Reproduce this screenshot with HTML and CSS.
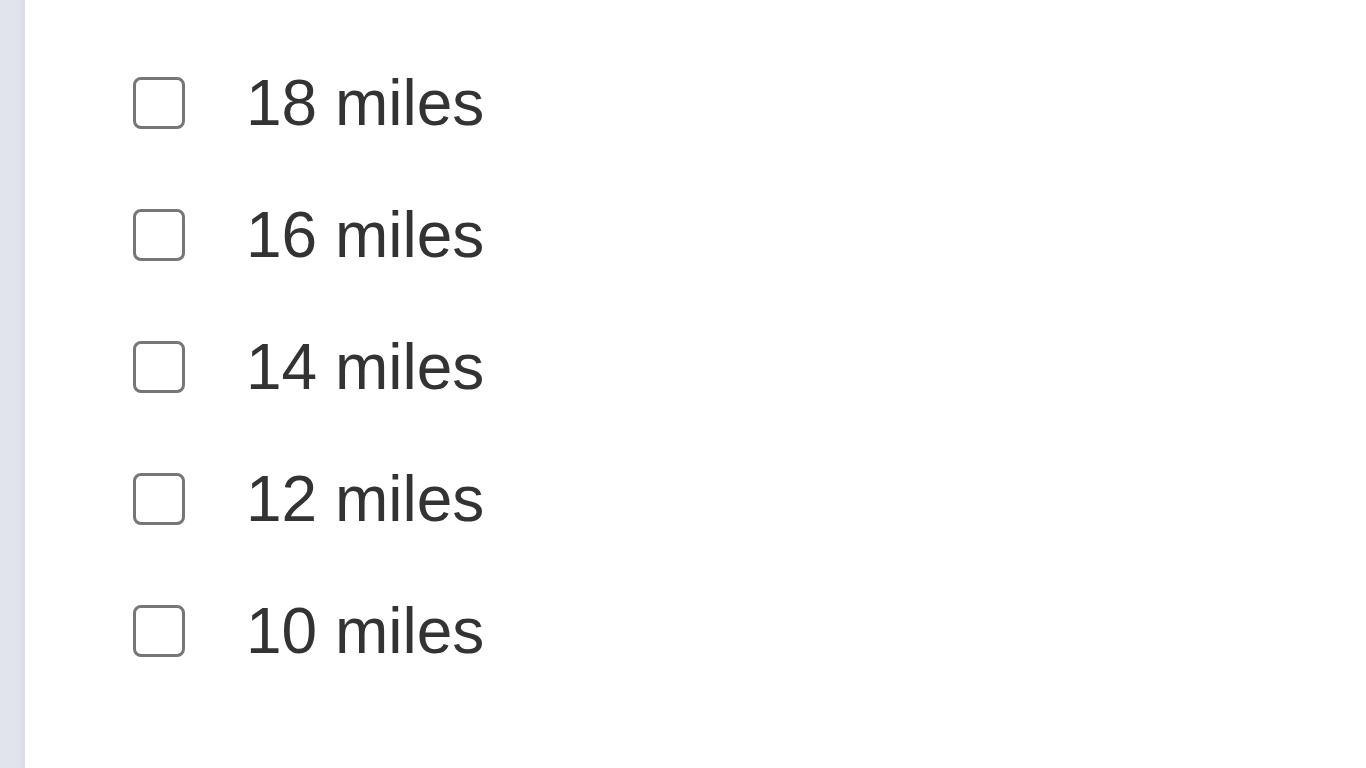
FILE: index.html
```html
<!DOCTYPE html>
<html lang="en">
<head>
<meta charset="utf-8">
<title>Distance filter</title>
<link rel="stylesheet" href="styles.css">
</head>
<body>
<div class="layout">
  <aside class="rail"></aside>
  <main class="panel">
    <ul class="options">
      <li class="option"><label><input type="checkbox" class="box"><span class="label">18 miles</span></label></li>
      <li class="option"><label><input type="checkbox" class="box"><span class="label">16 miles</span></label></li>
      <li class="option"><label><input type="checkbox" class="box"><span class="label">14 miles</span></label></li>
      <li class="option"><label><input type="checkbox" class="box"><span class="label">12 miles</span></label></li>
      <li class="option"><label><input type="checkbox" class="box"><span class="label">10 miles</span></label></li>
    </ul>
  </main>
</div>
</body>
</html>
```
FILE: styles.css
```css
html, body {
  margin: 0;
  padding: 0;
  height: 100%;
  background: #ffffff;
  font-family: "Liberation Sans", Arial, sans-serif;
}
.layout {
  display: flex;
  height: 768px;
  overflow: hidden;
}
.rail {
  width: 25px;
  flex: 0 0 25px;
  background: #e1e4ed;
  box-shadow: inset -7px 0 6px -5px rgba(0, 0, 0, 0.06);
}
.panel {
  flex: 1;
  background: #ffffff;
}
.options {
  list-style: none;
  margin: 0;
  padding: 37px 0 0 108px;
}
.option {
  height: 132px;
  display: flex;
  align-items: center;
}
.option label {
  display: flex;
  align-items: center;
  gap: 61px;
  cursor: pointer;
}
.box {
  appearance: none;
  -webkit-appearance: none;
  margin: 0;
  width: 52px;
  height: 52px;
  box-sizing: border-box;
  border: 3px solid #767676;
  border-radius: 8px;
  background: #ffffff;
}
.label {
  font-size: 64px;
  line-height: 74px;
  color: #333333;
}
```
